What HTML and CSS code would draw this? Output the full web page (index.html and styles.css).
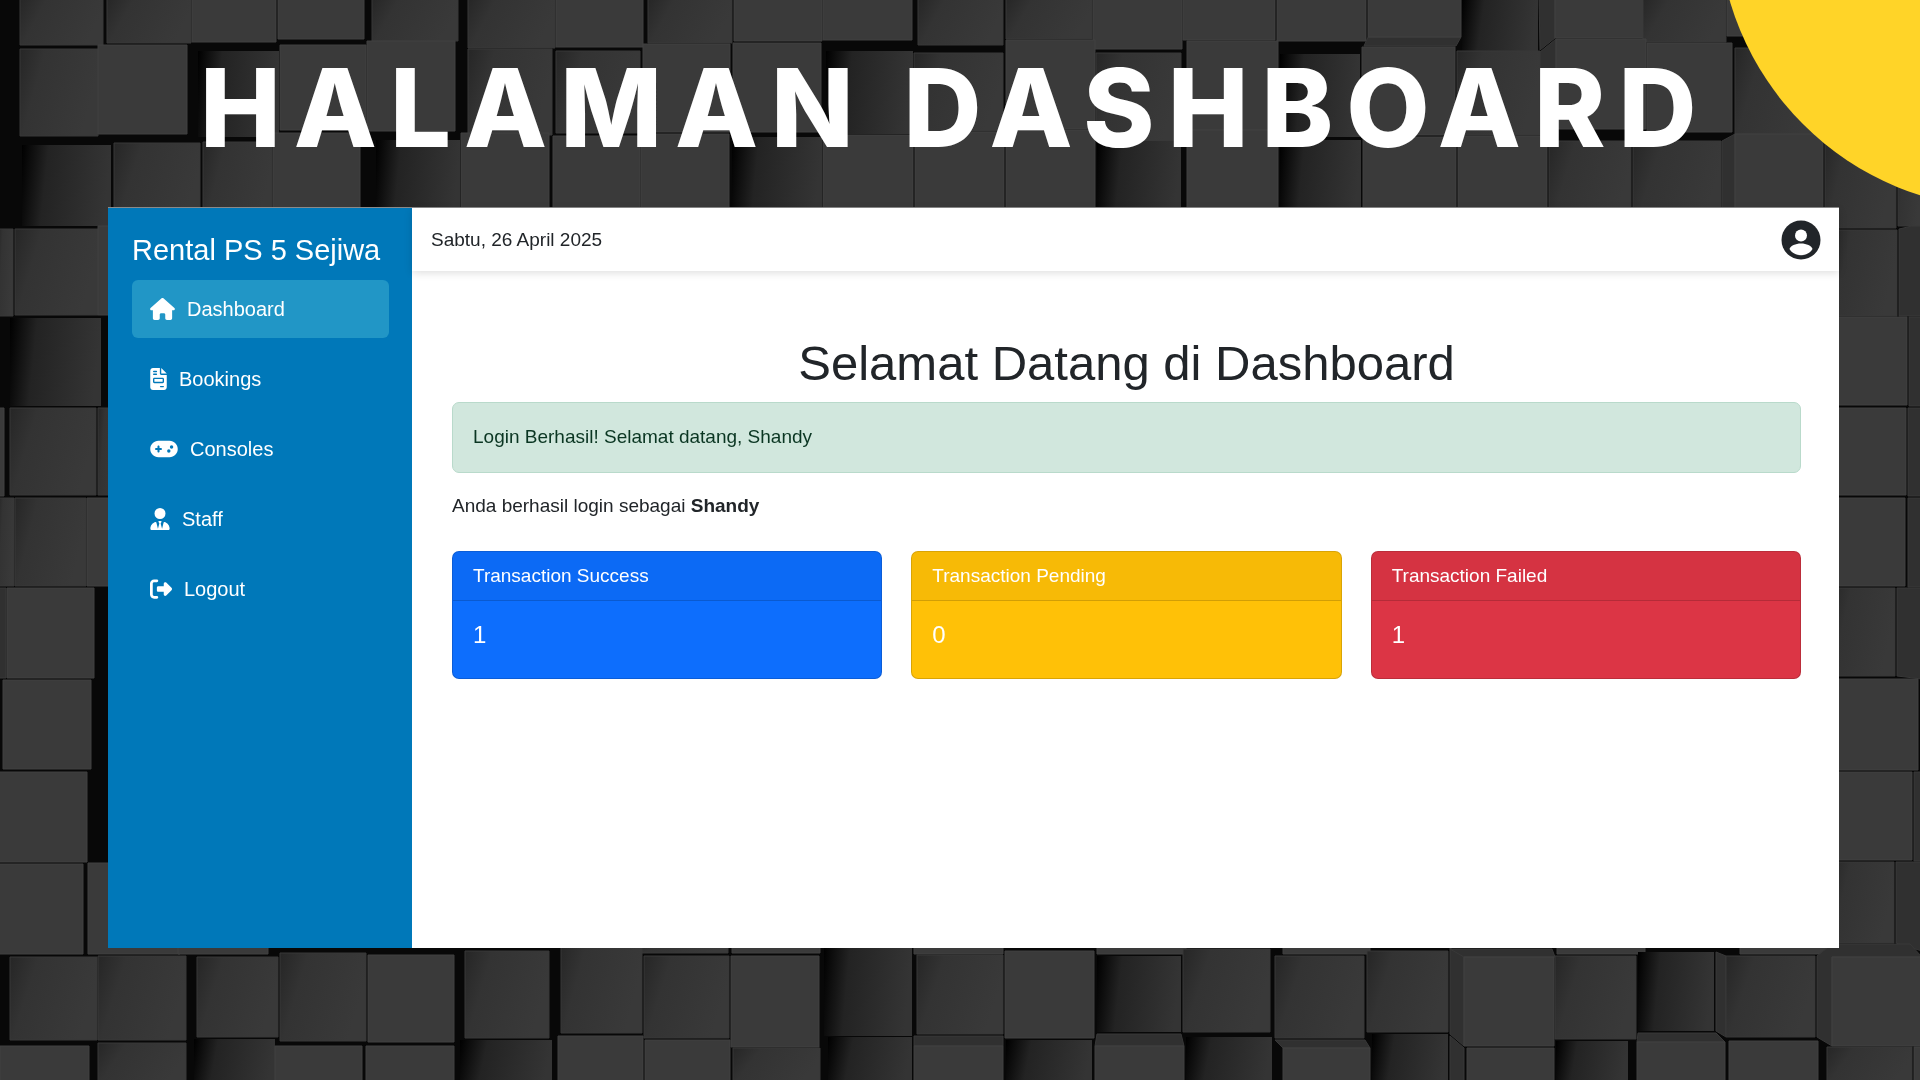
FILE: index.html
```html
<!DOCTYPE html>
<html lang="id">
<head>
<meta charset="utf-8">
<meta name="viewport" content="width=device-width, initial-scale=1">
<title>Halaman Dashboard</title>
<link rel="stylesheet" href="styles.css">
</head>
<body>
<svg class="backdrop" viewBox="0 0 1920 1080" preserveAspectRatio="xMidYMid slice" aria-hidden="true">
  <defs>
    <linearGradient id="shade" x1="0" y1="0" x2="1" y2="0.3">
      <stop offset="0" stop-color="#262626"/><stop offset="0.3" stop-color="#333"/><stop offset="1" stop-color="#393939"/>
    </linearGradient>
    <linearGradient id="deep" x1="0" y1="0" x2="1" y2="0.1">
      <stop offset="0" stop-color="#000"/><stop offset="0.3" stop-color="#232323"/><stop offset="1" stop-color="#343434"/>
    </linearGradient>
  </defs>
  <rect width="1920" height="1080" fill="#080808"/>
  <!-- top row -->
  <path class="low" d="M20-2H103V45H20z"/><path class="low" d="M107-2H191V43H107z"/><path class="top" d="M192-2H276V42H192z"/>
  <path class="top" d="M278-2H364V39H278z"/><path class="low" d="M372-2H458V41H372z"/><path class="low" d="M468-2H555V48H468z"/>
  <path class="top" d="M556-2H643V47H556z"/><path class="low" d="M648-2H732V43H648z"/><path class="top" d="M734-2H822V41H734z"/>
  <path class="top" d="M823-2H912V40H823z"/><path class="low" d="M918-2H1003V45H918z"/><path class="low" d="M1006-2H1092V39H1006z"/>
  <path class="top" d="M1093-2H1182V49H1093z"/><path class="top" d="M1183-2H1275V40H1183z"/><path class="top" d="M1277-2H1366V41H1277z"/>
  <path class="side" d="M1368 37H1461L1456 46H1364z"/><path class="top" d="M1368-2H1461V37H1368z"/><path class="deep" d="M1462-2H1538V51H1462z"/>
  <path class="side" d="M1539-2H1555V38L1540 50z"/><path class="top" d="M1555-2H1643V38H1555z"/><path class="low" d="M1643-2H1726V42H1643z"/><path class="top" d="M1727-2H1815V36H1727z"/>
  <!-- second row -->
  <path class="low" d="M20 49H98V136H20z"/><path class="top" d="M98 45H187V134H98z"/><path class="deep" d="M198 51H279V137H198z"/>
  <path class="top" d="M280 45H366V130H280z"/><path class="top" d="M367 41H455V131H367z"/><path class="low" d="M468 49H552V135H468z"/>
  <path class="low" d="M556 51H640V133H556z"/><path class="top" d="M643 44H730V132H643z"/><path class="top" d="M733 43H821V132H733z"/>
  <path class="deep" d="M826 51H913V134H826z"/><path class="low" d="M914 53H1003V131H914z"/><path class="top" d="M1006 40H1095V129H1006z"/>
  <path class="low" d="M1096 53H1181V141H1096z"/><path class="top" d="M1187 41H1278V130H1187z"/><path class="deep" d="M1280 54H1360V137H1280z"/>
  <path class="top" d="M1362 47H1455V135H1362z"/><path class="low" d="M1457 51H1540V135H1457z"/><path class="side" d="M1540 52L1556 39V129L1540 135z"/>
  <path class="top" d="M1556 39H1646V129H1556z"/><path class="top" d="M1647 43H1732V132H1647z"/><path class="low" d="M1735 48H1820V134H1735z"/>
  <!-- third row -->
  <path class="deep" d="M22 145H111V226H22z"/><path class="low" d="M114 143H200V226H114z"/><path class="low" d="M203 142H272V226H203z"/>
  <path class="top" d="M273 133H360V226H273z"/><path class="deep" d="M376 140H460V226H376z"/><path class="top" d="M461 133H549V226H461z"/>
  <path class="top" d="M553 136H640V226H553z"/><path class="top" d="M641 134H729V226H641z"/><path class="deep" d="M732 137H822V226H732z"/>
  <path class="top" d="M823 135H913V226H823z"/><path class="top" d="M915 132H1004V226H915z"/><path class="top" d="M1006 130H1095V226H1006z"/>
  <path class="deep" d="M1097 141H1181V226H1097z"/><path class="top" d="M1187 130H1278V226H1187z"/><path class="deep" d="M1280 140H1361V226H1280z"/>
  <path class="top" d="M1363 137H1456V226H1363z"/><path class="top" d="M1458 136H1547V226H1458z"/><path class="low" d="M1549 141H1631V226H1549z"/>
  <path class="low" d="M1633 141H1721V226H1633z"/><path class="side" d="M1722 141L1735 134V226H1722z"/><path class="top" d="M1735 134H1823V226H1735z"/>
  <path class="low" d="M1825 134H1896V228H1825z"/><path class="low" d="M1898 134H1922V226H1898z"/>
  <!-- left edge -->
  <path class="low" d="M-2 229H13V316H-2z"/><path class="low" d="M15 229H98V315H15z"/><path class="top" d="M98 226H120V315H98z"/>
  <path class="deep" d="M10 318H101V406H10z"/><path class="top" d="M-2 408H4V496H-2z"/><path class="low" d="M10 408H96V495H10z"/><path class="low" d="M98 408H120V495H98z"/>
  <path class="low" d="M-2 498H14V586H-2z"/><path class="low" d="M15 498H86V586H15z"/><path class="top" d="M87 498H120V586H87z"/>
  <path class="side" d="M-2 588H6V678H-2z"/><path class="top" d="M7 588H94V678H7z"/><path class="top" d="M3 680H91V769H3z"/>
  <path class="top" d="M-2 772H87V862H-2z"/><path class="top" d="M-2 864H83V954H-2z"/><path class="top" d="M88 863H180V954H88z"/>
  <!-- right edge -->
  <path class="low" d="M1830 230H1897V316H1830z"/><path class="side" d="M1899 229L1912 226H1922V316H1899z"/>
  <path class="top" d="M1830 317H1907V405H1830z"/><path class="side" d="M1909 317H1922V406H1909z"/>
  <path class="top" d="M1830 408H1906V495H1830z"/><path class="side" d="M1908 408H1922V496H1908z"/>
  <path class="top" d="M1830 498H1905V586H1830z"/><path class="side" d="M1908 498H1922V587H1908z"/>
  <path class="low" d="M1830 588H1895V676H1830z"/><path class="side" d="M1897 588H1922V679L1897 676z"/>
  <path class="top" d="M1830 679H1918V770H1830z"/><path class="top" d="M1830 772H1912V860H1830z"/><path class="side" d="M1914 772H1922V861H1914z"/>
  <path class="low" d="M1830 862H1894V943H1830z"/><path class="side" d="M1896 862H1922V951L1896 943z"/>
  <!-- fourth row -->
  <path class="top" d="M178 940H268V954H178z"/><path class="low" d="M640 940H728V953H640z"/><path class="top" d="M732 940H820V953H732z"/><path class="top" d="M914 940H1003V954H914z"/>
  <path class="top" d="M1097 940H1186V954H1097z"/><path class="top" d="M1283 940H1370V954H1283z"/><path class="top" d="M1557 940H1645V954H1557z"/><path class="top" d="M1740 940H1831V954H1740z"/>
  <path class="low" d="M10 957H97V1040H10z"/><path class="low" d="M98 956H186V1040H98z"/><path class="low" d="M197 957H278V1037H197z"/>
  <path class="low" d="M280 953H366V1041H280z"/><path class="top" d="M368 955H454V1042H368z"/><path class="low" d="M465 951H549V1038H465z"/>
  <path class="low" d="M561 940H642V1033H561z"/><path class="low" d="M644 956H729V1038H644z"/><path class="top" d="M731 956H819V1047H731z"/>
  <path class="deep" d="M824 940H912V1036H824z"/><path class="low" d="M917 955H1003V1034H917z"/><path class="top" d="M1005 951H1094V1038H1005z"/>
  <path class="deep" d="M1097 956H1181V1032H1097z"/><path class="low" d="M1183 949H1270V1032H1183z"/><path class="low" d="M1275 956H1364V1038H1275z"/>
  <path class="low" d="M1367 951H1448V1032H1367z"/><path class="side" d="M1450 948L1464 957V1046L1450 1034z"/><path class="side" d="M1450 949H1552L1555 957H1464z"/><path class="top" d="M1464 957H1554V1046H1464z"/>
  <path class="low" d="M1555 956H1636V1039H1555z"/><path class="deep" d="M1638 952H1714V1031H1638z"/><path class="side" d="M1716 952L1726 956V1037L1716 1031z"/>
  <path class="low" d="M1726 956H1815V1037H1726z"/><path class="side" d="M1817 956L1832 944H1910L1922 957H1832V1046L1817 1037z"/><path class="top" d="M1832 957H1922V1046H1832z"/>
  <!-- bottom row -->
  <path class="top" d="M0 1046H89V1082H0z"/><path class="low" d="M98 1043H186V1082H98z"/><path class="deep" d="M194 1039H275V1082H194z"/>
  <path class="top" d="M275 1046H362V1082H275z"/><path class="top" d="M366 1046H454V1082H366z"/><path class="deep" d="M460 1040H552V1082H460z"/>
  <path class="top" d="M558 1036H643V1082H558z"/><path class="top" d="M645 1040H730V1082H645z"/><path class="low" d="M733 1048H820V1082H733z"/>
  <path class="deep" d="M828 1037H912V1082H828z"/><path class="side" d="M914 1036H1003V1046H914z"/><path class="top" d="M914 1046H1003V1082H914z"/>
  <path class="deep" d="M1006 1040H1092V1082H1006z"/><path class="side" d="M1097 1034H1181L1184 1046H1095z"/><path class="top" d="M1095 1046H1184V1082H1095z"/>
  <path class="deep" d="M1186 1037H1272V1082H1186z"/><path class="side" d="M1275 1040H1365L1370 1048H1283z"/><path class="top" d="M1283 1048H1370V1082H1283z"/>
  <path class="deep" d="M1372 1034H1448V1082H1372z"/><path class="side" d="M1450 1036L1464 1048V1082H1450z"/><path class="top" d="M1467 1048H1554V1082H1467z"/>
  <path class="deep" d="M1556 1041H1628V1082H1556z"/><path class="side" d="M1638 1033H1716L1725 1042H1637z"/><path class="top" d="M1637 1042H1725V1082H1637z"/>
  <path class="top" d="M1729 1041H1818V1082H1729z"/><path class="low" d="M1827 1047H1912V1082H1827z"/><path class="top" d="M1914 1047H1922V1082H1914z"/>
  <circle cx="2008" cy="-81" r="290" fill="#ffd428"/>
</svg>

<h1 class="slide-title">HALAMAN DASHBOARD</h1>

<div class="app">
  <aside class="sidebar">
    <div class="brand">Rental PS 5 Sejiwa</div>
    <nav class="menu">
      <a class="menu-link active" href="#dashboard"><svg class="icon" width="25" height="22" viewBox="0 0 576 512" aria-hidden="true"><path d="M575.8 255.5c0 18-15 32.1-32 32.1h-32l.7 160.2c0 2.7-.2 5.4-.5 8.1V472c0 22.1-17.9 40-40 40H392c-22.1 0-40-17.9-40-40V384c0-17.7-14.3-32-32-32H256c-17.7 0-32 14.3-32 32v88c0 22.1-17.9 40-40 40H104c-22.1 0-40-17.9-40-40V287.6H32c-18 0-32-14-32-32.1c0-9 3-17 10-24L266.4 8c7-7 15-8 22-8s15 2 21 7L564.8 231.5c8 7 12 15 11 24z"/></svg>Dashboard</a>
      <a class="menu-link" href="#bookings"><svg class="icon" width="17" height="22" viewBox="0 0 384 512" aria-hidden="true"><path d="M64 0C28.700 0 0 28.700 0 64V448c0 35.300 28.700 64 64 64H320c35.300 0 64-28.700 64-64V160H256c-17.700 0-32-14.300-32-32V0H64zM256 0V128H384L256 0zM80 64h64c8.800 0 16 7.200 16 16s-7.200 16-16 16H80c-8.800 0-16-7.200-16-16s7.200-16 16-16zm0 64h64c8.800 0 16 7.200 16 16s-7.200 16-16 16H80c-8.800 0-16-7.200-16-16s7.200-16 16-16zm16 96H288c17.700 0 32 14.300 32 32v64c0 17.700-14.300 32-32 32H96c-17.700 0-32-14.300-32-32V256c0-17.700 14.300-32 32-32zm0 32v64H288V256H96zM240 416h64c8.800 0 16 7.200 16 16s-7.200 16-16 16H240c-8.800 0-16-7.200-16-16s7.200-16 16-16z" fill-rule="evenodd"/></svg>Bookings</a>
      <a class="menu-link" href="#consoles"><svg class="icon" width="28" height="22" viewBox="0 0 640 512" aria-hidden="true"><path d="M192 64C86 64 0 150 0 256S86 448 192 448H448c106 0 192-86 192-192s-86-192-192-192H192zM496 168a40 40 0 1 1 0 80 40 40 0 1 1 0-80zM392 304a40 40 0 1 1 80 0 40 40 0 1 1 -80 0zM168 200c0-13.300 10.700-24 24-24s24 10.700 24 24v32h32c13.300 0 24 10.700 24 24s-10.700 24-24 24H216v32c0 13.300-10.700 24-24 24s-24-10.700-24-24V280H136c-13.300 0-24-10.700-24-24s10.700-24 24-24h32V200z" fill-rule="evenodd"/></svg>Consoles</a>
      <a class="menu-link" href="#staff"><svg class="icon" width="20" height="22" viewBox="0 0 448 512" aria-hidden="true"><path d="M96 128a128 128 0 1 0 256 0A128 128 0 1 0 96 128zm94.500 200.200l18.600 31L175.800 483.100l-36-146.900c-2-8.100-9.800-13.400-17.900-11.300C51.900 342.400 0 405.800 0 481.300c0 17 13.800 30.700 30.700 30.700H417.300c17 0 30.700-13.800 30.700-30.700c0-75.500-51.900-138.900-121.900-156.400c-8.100-2-15.900 3.300-17.900 11.300l-36 146.900L238.900 359.200l18.600-31c6.400-10.700-1.300-24.200-13.700-24.200H204.300c-12.400 0-20.100 13.600-13.700 24.200z"/></svg>Staff</a>
      <a class="menu-link" href="#logout"><svg class="icon" width="22" height="22" viewBox="0 0 512 512" aria-hidden="true"><path d="M377.900 105.900L500.700 228.700c7.200 7.200 11.300 17.100 11.300 27.300s-4.100 20.100-11.300 27.300L377.900 406.100c-6.400 6.400-15 9.900-24 9.900c-18.700 0-33.900-15.200-33.900-33.900l0-62.100-128 0c-17.700 0-32-14.300-32-32l0-64c0-17.700 14.300-32 32-32l128 0 0-62.100c0-18.700 15.200-33.900 33.900-33.900c9 0 17.600 3.600 24 9.900zM160 96L96 96c-17.700 0-32 14.300-32 32l0 256c0 17.700 14.300 32 32 32l64 0c17.700 0 32 14.300 32 32s-14.300 32-32 32l-64 0c-53 0-96-43-96-96L0 128C0 75 43 32 96 32l64 0c17.700 0 32 14.300 32 32s-14.300 32-32 32z"/></svg>Logout</a>
    </nav>
  </aside>
  <div class="page">
    <header class="topbar">
      <span>Sabtu, 26 April 2025</span>
      <button class="account" type="button" aria-label="Akun"><svg width="40" height="40" viewBox="0 0 40 40" aria-hidden="true"><circle cx="20" cy="20" r="19.500" fill="#212529"/><circle cx="20" cy="15.500" r="6" fill="#fff"/><path d="M8.500 29C9.500 26 14.500 23.600 20 23.600S30.500 26 31.500 29C29 33 25 35.200 20 35.200S11 33 8.500 29z" fill="#fff"/></svg></button>
    </header>
    <main class="content">
      <h2 class="welcome">Selamat Datang di Dashboard</h2>
      <div class="alert" role="alert">Login Berhasil! Selamat datang, Shandy</div>
      <p class="note">Anda berhasil login sebagai <strong>Shandy</strong></p>
      <div class="cards">
        <section class="card success"><h3 class="card-head">Transaction Success</h3><p class="card-value">1</p></section>
        <section class="card pending"><h3 class="card-head">Transaction Pending</h3><p class="card-value">0</p></section>
        <section class="card failed"><h3 class="card-head">Transaction Failed</h3><p class="card-value">1</p></section>
      </div>
    </main>
  </div>
</div>
</body>
</html>
```

FILE: styles.css
```css
* { box-sizing: border-box; }

body {
  display: flex;
  flex-direction: column;
  min-height: 100vh;
  margin: 0;
  padding: 0 81px 132px 108px;
  background: #080808;
  color: #212529;
  font: 19px/30px "Liberation Sans", Arial, sans-serif;
}

h1, h2, h3, p { margin: 0; font-weight: 400; }

.backdrop {
  position: fixed;
  inset: 0;
  z-index: -1;
  width: 100%;
  height: 100%;
}
.backdrop .top { fill: #3a3a3a; stroke: #414141; }
.backdrop .low { fill: url(#shade); stroke: #393939; }
.backdrop .deep { fill: url(#deep); }
.backdrop .side { fill: #303030; stroke: #383838; }

.slide-title {
  padding: 52px 0 43px 92px;
  color: #fff;
  font: 800 108px/112px Inter, "Liberation Sans", sans-serif;
  letter-spacing: 13px;
  white-space: nowrap;
}

.app {
  display: flex;
  flex: 1;
  background: #fff;
  border-top: 1px solid #8a8a8a;
}

.sidebar {
  flex: none;
  width: 304px;
  padding: 22px 23px 20px 24px;
  background: #0078b9;
  color: #fff;
}
.brand { font-size: 29px; line-height: 40px; margin-bottom: 10px; white-space: nowrap; }
.menu { display: flex; flex-direction: column; gap: 12px; }
.menu-link {
  display: flex;
  align-items: center;
  gap: 12px;
  height: 58px;
  padding: 0 18px;
  border-radius: 6px;
  color: #fff;
  font-size: 20px;
  text-decoration: none;
}
.menu-link.active { background: #2196c6; }
.icon { fill: #fff; }

.page { flex: 1; min-width: 0; }
.topbar {
  display: flex;
  align-items: center;
  justify-content: space-between;
  height: 63px;
  padding: 0 18px 0 19px;
  box-shadow: 0 2px 8px rgba(0, 0, 0, .13);
}
.account { display: flex; padding: 0; border: 0; background: none; }

.content { padding: 62px 38px 40px 40px; }
.welcome { font-size: 49px; line-height: 60px; margin-bottom: 9px; text-align: center; }
.alert {
  padding: 19px 20px 20px;
  border: 1px solid #b9dacb;
  border-radius: 7px;
  background: #d1e7dd;
  color: #0a3622;
}
.note { margin: 18px 0 30px; }
.cards { display: grid; grid-template-columns: repeat(3, 1fr); gap: 29px; }
.card { border: 1px solid rgba(0, 0, 0, .15); border-radius: 7px; color: #fff; overflow: hidden; }
.card-head {
  padding: 9px 20px;
  border-bottom: 1px solid rgba(0, 0, 0, .15);
  background: rgba(0, 0, 0, .03);
  font-size: 19px;
}
.card-value { padding: 19px 20px 28px; font-size: 24px; }
.success { background: #0d6efd; }
.pending { background: #ffc107; }
.failed { background: #dc3545; }
```
